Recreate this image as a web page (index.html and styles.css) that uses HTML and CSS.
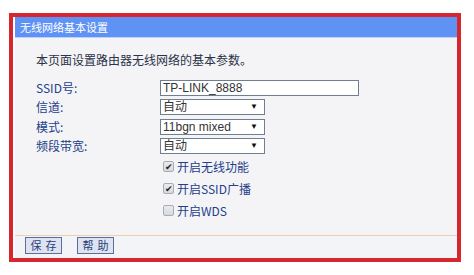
FILE: index.html
```html
<!DOCTYPE html>
<html>
<head lang="zh-CN">
    <meta charset="UTF-8">
    <title>无线网络基本设置</title>
    <link rel="stylesheet" href="styles.css">
</head>
<body>
<div class="frame">
    <div class="panel">
        <div class="phead">无线网络基本设置</div>
        <div class="pbody">
            <p class="intro">本页面设置路由器无线网络的基本参数。</p>
            <div class="row">
                <label class="lbl">SSID号:</label>
                <div class="ipt">TP-LINK_8888</div>
            </div>
            <div class="row">
                <label class="lbl">信道:</label>
                <div class="sel">自动<span class="arr">▼</span></div>
            </div>
            <div class="row">
                <label class="lbl">模式:</label>
                <div class="sel">11bgn mixed<span class="arr">▼</span></div>
            </div>
            <div class="row">
                <label class="lbl">频段带宽:</label>
                <div class="sel">自动<span class="arr">▼</span></div>
            </div>
            <div class="chk"><span class="box on">✔</span>开启无线功能</div>
            <div class="chk"><span class="box on">✔</span>开启SSID广播</div>
            <div class="chk"><span class="box"></span>开启WDS</div>
        </div>
        <div class="pfoot">
            <button class="btn">保存</button>
            <button class="btn">帮助</button>
        </div>
    </div>
</div>
</body>
</html>
```

FILE: styles.css
```css
*{margin:0;padding:0;box-sizing:border-box;}
body{background:#fff;font-family:"Noto Sans CJK SC","Liberation Sans",sans-serif;font-size:12px;}
.frame{margin:13px 0 0 9px;width:452px;height:249px;border:4px solid #d7262e;padding-left:2px;background:#fff;}
.panel{height:100%;background:#f4f4f6;display:flex;flex-direction:column;}
.phead{height:21px;line-height:20px;background:#5f92f5;border-bottom:1px solid #bcd3f7;color:#fff;padding-left:5px;font-size:11px;}
.pbody{height:198px;padding:14px 0 0 21px;border-bottom:1px solid #efcfae;}
.intro{line-height:16px;color:#2a3348;margin-bottom:12px;}
.row{display:flex;height:16px;align-items:center;margin-bottom:3.3px;}
.lbl{width:124px;color:#22408a;line-height:16px;}
.ipt{width:199px;height:16px;border:1px solid #6f7f93;background:#fff;font-family:"Liberation Sans",sans-serif;color:#333;line-height:14px;padding-left:2px;}
.sel{width:105px;height:16px;border:1px solid #6f7f93;background:#fff;color:#333;line-height:14px;padding-left:2px;position:relative;font-family:"Liberation Sans","Noto Sans CJK SC",sans-serif;}
.arr{position:absolute;right:6px;top:0;font-size:8px;color:#111;}
.row:nth-of-type(4){margin-bottom:2px;}
.chk{display:flex;align-items:center;height:22px;padding-left:127px;color:#22408a;}
.box{width:11px;height:11px;border:1px solid #a9adb3;border-radius:2px;background:linear-gradient(#e9ebee,#d6d9de);margin-right:3px;font-size:9px;line-height:9px;text-align:center;color:#222;}
.pfoot{flex:1;display:flex;align-items:flex-start;gap:15px;padding:1px 0 0 10px;background:#f3f4f7;}
.btn{width:37px;height:17px;background:#dde3f3;border:1px solid #5c6d96;color:#2b3d73;font-family:"Noto Sans CJK SC",sans-serif;font-size:11px;letter-spacing:4px;padding-left:4px;line-height:15px;}
```
